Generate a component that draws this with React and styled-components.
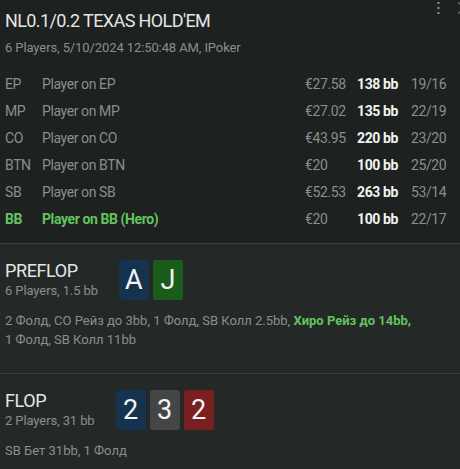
import React from "react";
import styled, { createGlobalStyle } from "styled-components";

const Global = createGlobalStyle`
  html, body { margin: 0; padding: 0; }
  body {
    background: #242927;
    font-family: Roboto, "Noto Sans", sans-serif;
    width: 460px;
    height: 469px;
    overflow: hidden;
  }
`;

const Page = styled.div`
  position: relative;
  width: 460px;
  min-height: 469px;
  background: #242927;
`;

const Header = styled.header`
  background: #1d211f;
  padding: 9px 5px 11px 5px;
`;

const Title = styled.h1`
  margin: 0;
  font-size: 18px;
  font-weight: 400;
  line-height: 24px;
  color: #e4e6e5;
  letter-spacing: -0.6px;
`;

const Sub = styled.div`
  font-size: 13px;
  line-height: 18px;
  color: #8b8e8c;
  margin-top: ${(p) => p.$mt || 0}px;
  letter-spacing: -0.1px;
`;

const Table = styled.div`
  margin-top: 13px;
  display: grid;
  grid-template-columns: 37px 263px 52px 54px 1fr;
  grid-auto-rows: 27px;
  align-items: center;
  font-size: 14px;
  letter-spacing: -0.4px;
`;

const Cell = styled.div`
  color: ${(p) => (p.$hero ? "#63c35f" : p.$strong ? "#f2f2f2" : "#8b8e8c")};
  font-weight: ${(p) => (p.$hero || p.$strong ? 700 : 400)};
  white-space: nowrap;
`;

const Menu = styled.div`
  position: absolute;
  top: 0;
  right: 0;
  display: flex;
  gap: 16px;
  align-items: flex-start;
`;

const Street = styled.section`
  border-top: 1px solid #3b403d;
  padding: 16px 5px 24px 5px;
`;

const StreetHead = styled.div`
  display: flex;
  align-items: center;
  gap: 21px;
`;

const StreetName = styled.div`
  font-size: 18px;
  line-height: 22px;
  color: #e4e6e5;
  letter-spacing: -0.4px;
`;

const Cards = styled.div`
  display: flex;
  gap: 4px;
`;

const Card = styled.div`
  width: 30px;
  height: 40px;
  border-radius: 3px;
  background: ${(p) => p.$bg};
  color: #f4f4f4;
  font-size: 27px;
  line-height: 40px;
  text-align: center;
`;

const Actions = styled.p`
  margin: 11px 0 0 0;
  font-size: 13px;
  line-height: 19px;
  color: #8b8e8c;
`;

const Hero = styled.span`
  color: #63c35f;
  font-weight: 700;
`;

const players = [
  ["EP", "Player on EP", "€27.58", "138 bb", "19/16"],
  ["MP", "Player on MP", "€27.02", "135 bb", "22/19"],
  ["CO", "Player on CO", "€43.95", "220 bb", "23/20"],
  ["BTN", "Player on BTN", "€20", "100 bb", "25/20"],
  ["SB", "Player on SB", "€52.53", "263 bb", "53/14"],
  ["BB", "Player on BB (Hero)", "€20", "100 bb", "22/17", true],
];

const suit = { s: "#15334f", c: "#1a5c1a", d: "#444646", h: "#7a1f1f" };

export default function App() {
  return (
    <Page>
      <Global />
      <Menu>
        <svg width="6" height="16" viewBox="0 0 6 16">
          <rect x="1.5" y="2" width="2" height="2" fill="#8a8d8b" />
          <rect x="1.5" y="7" width="2" height="2" fill="#8a8d8b" />
          <rect x="1.5" y="12" width="2" height="2" fill="#8a8d8b" />
        </svg>
        <svg width="2" height="16" viewBox="0 0 2 16">
          <path d="M0 2 L5 8 M0 14 L5 8" stroke="#8a8d8b" strokeWidth="1" fill="none" />
        </svg>
      </Menu>
      <Header>
        <Title>NL0.1/0.2 TEXAS HOLD'EM</Title>
        <Sub $mt={6}>6 Players, 5/10/2024 12:50:48 AM, IPoker</Sub>
        <Table>
          {players.map(([pos, name, money, bb, stat, hero]) => (
            <React.Fragment key={pos}>
              <Cell $hero={hero}>{pos}</Cell>
              <Cell $hero={hero}>{name}</Cell>
              <Cell>{money}</Cell>
              <Cell $strong>{bb}</Cell>
              <Cell>{stat}</Cell>
            </React.Fragment>
          ))}
        </Table>
      </Header>
      <Street>
        <StreetHead>
          <div>
            <StreetName>PREFLOP</StreetName>
            <Sub>6 Players, 1.5 bb</Sub>
          </div>
          <Cards>
            <Card $bg={suit.s}>A</Card>
            <Card $bg={suit.c}>J</Card>
          </Cards>
        </StreetHead>
        <Actions>
          2 Фолд, CO Рейз до 3bb, 1 Фолд, SB Колл 2.5bb, <Hero>Хиро Рейз до 14bb,</Hero>
          <br />1 Фолд, SB Колл 11bb
        </Actions>
      </Street>
      <Street>
        <StreetHead>
          <div>
            <StreetName>FLOP</StreetName>
            <Sub>2 Players, 31 bb</Sub>
          </div>
          <Cards>
            <Card $bg={suit.s}>2</Card>
            <Card $bg={suit.d}>3</Card>
            <Card $bg={suit.h}>2</Card>
          </Cards>
        </StreetHead>
        <Actions>SB Бет 31bb, 1 Фолд</Actions>
      </Street>
    </Page>
  );
}
